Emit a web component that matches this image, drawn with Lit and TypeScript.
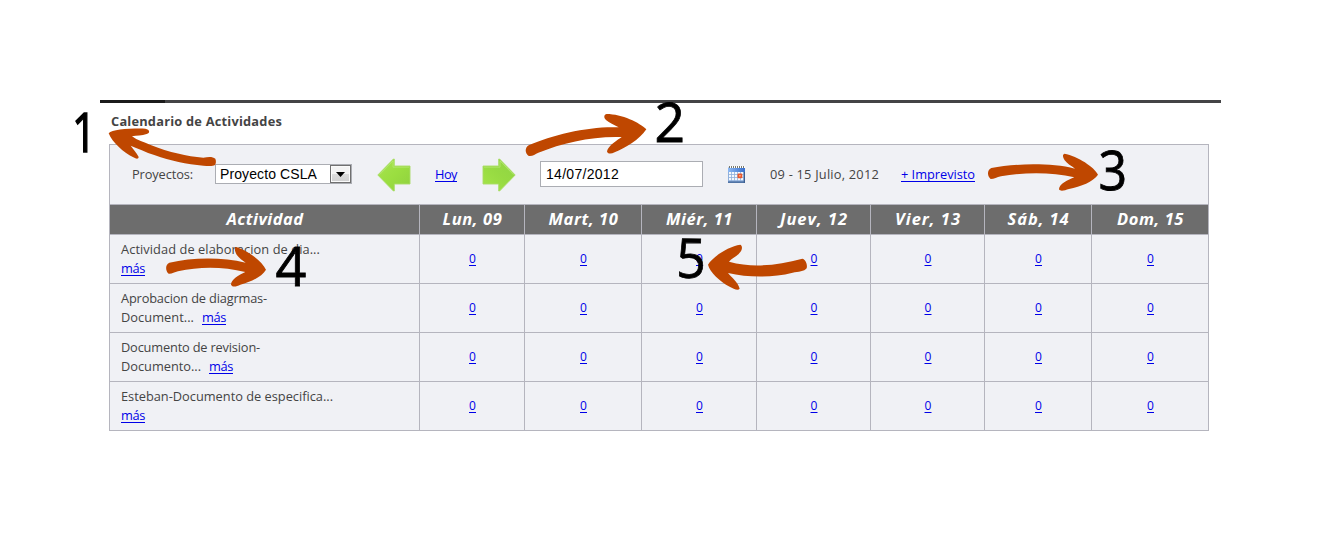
import { LitElement, html, css, svg } from "lit";
import { customElement, property } from "lit/decorators.js";

/** Inline text whose tracking is adjusted so that it spans a given width. */
@customElement("fit-text")
class FitText extends LitElement {
  @property({ type: Number }) w = 0;
  @property({ type: Boolean }) link = false;
  static styles = css`
    :host { display: inline-block; white-space: pre; }
    .t { display: inline-block; }
    .u { text-decoration: underline; text-underline-offset: 2px; text-decoration-thickness: 1px; text-decoration-skip-ink: none; }
  `;
  render() {
    return html`<span class=${this.link ? "t u" : "t"}><slot></slot></span>`;
  }
  firstUpdated() {
    const t = this.renderRoot.querySelector(".t") as HTMLElement;
    const n = (this.textContent || "").length;
    const width = t.getBoundingClientRect().width;
    if (this.w && n) t.style.letterSpacing = `${(this.w - width) / n}px`;
  }
}

const days: [string, number][] = [
  ["Lun, 09", 60], ["Mart, 10", 70], ["Miér, 11", 67], ["Juev, 12", 68],
  ["Vier, 13", 66], ["Sáb, 14", 62], ["Dom, 15", 67],
];

const rows: { a: string; aw: number; b?: string; bw?: number }[] = [
  { a: "Actividad de elaboracion de dia...", aw: 199 },
  { a: "Aprobacion de diagrmas-", aw: 146, b: "Document...", bw: 73 },
  { a: "Documento de revision-", aw: 139, b: "Documento...", bw: 80 },
  { a: "Esteban-Documento de especifica...", aw: 212 },
];

const green = (id: string, flip: boolean) => html`
  <svg class="nav" width="34" height="34" viewBox="0 0 34 34">
    <defs>
      <linearGradient id=${id} x1="0" y1="0" x2="1" y2="1">
        <stop offset="0" stop-color=${flip ? "#8fd444" : "#a8e253"} />
        <stop offset=".5" stop-color=${flip ? "#97da42" : "#9bde40"} />
        <stop offset="1" stop-color=${flip ? "#a5e548" : "#8fd03f"} />
      </linearGradient>
    </defs>
    <g transform=${flip ? "translate(34 0) scale(-1 1)" : ""}>
      <path d="M.8 17 16.4 1 17.3 1V8H33V26H17.3V33H16.4Z" fill="url(#${id})" stroke="#a9dc68" stroke-width=".9" />
      <path d="M2.5 16.7 16 3V9.2H32" fill="none" stroke="#b9ea78" stroke-width=".7" />
    </g>
  </svg>`;

@customElement("app-root")
class AppRoot extends LitElement {
  static styles = css`
    :host {
      display: block; position: relative; box-sizing: border-box;
      width: 1321px; height: 540px; padding: 100px 100px 0;
      background: #fff; overflow: hidden;
      font: 12.8px/19px "Open Sans", "Noto Sans", sans-serif; color: #444;
    }
    .rule { height: 3px; background: linear-gradient(90deg, #1b1b1b 65px, #444446 65px); }
    .title { margin: 9px 0 0 11px; height: 19px; font-weight: 700; font-size: 12.8px; }
    .cal {
      margin: 13px 0 0 9px; width: 1098px; padding: 1px; background: #b5b5be;
      display: grid; gap: 1px;
      grid-template-columns: 309px 104px 116px 114px 113px 113px 106px 116px;
      grid-template-rows: 59px 29px repeat(4, 48px);
    }
    .bar { grid-column: 1 / -1; background: #f0f1f5; display: flex; align-items: center; padding-left: 22px; }
    .bar > * { flex: none; }
    .label { width: 83px; }
    .select {
      box-sizing: border-box; width: 137px; height: 20px; border: 1px solid #abadb3; background: #fff;
      display: flex; align-items: center; justify-content: space-between; padding-left: 4px; margin-bottom: 1px;
      font: 14px/18px "Liberation Sans", Arial, sans-serif; color: #000;
    }
    .drop {
      box-sizing: border-box; width: 21px; height: 18px; border: 1px solid #707070;
      background: linear-gradient(#f3f3f3 50%, #dcdcdc 50%, #d0d0d0);
      display: flex; align-items: center; justify-content: center; box-shadow: inset 0 0 0 1px #fafafa;
    }
    .nav { margin: 0 24px 0 25px; display: block; }
    .nav + a { width: 22px; }
    .date {
      box-sizing: border-box; width: 163px; height: 26px; border: 1px solid #abadb3; background: #fff;
      padding-left: 5px; font: 14px/24px "Liberation Sans", Arial, sans-serif; color: #000; margin-bottom: 1px;
    }
    .icon { margin: 0 25px 1px; display: block; }
    .range { width: 131px; }
    a { color: #0000e8; }
    .head {
      background: #6d6d6d; color: #fff; font-weight: 700; font-style: italic; font-size: 16.5px;
      display: flex; align-items: center; justify-content: center; padding: 0 0 2px 1px;
    }
    .cell { background: #f0f1f5; display: flex; align-items: center; justify-content: center; padding: 0 0 1px 1px; font-size: 12px; }
    .act { background: #f0f1f5; padding: 5px 0 0 11px; }
    .line { height: 19px; display: flex; gap: 8px; }
    .notes { position: absolute; left: 0; top: 0; }
    .num { font: 54.5px "Open Sans", "Noto Sans", sans-serif; fill: #000; stroke: #000; stroke-width: .8px; }
  `;

  render() {
    return html`
      <div class="rule"></div>
      <div class="title"><fit-text w="171">Calendario de Actividades</fit-text></div>
      <div class="cal">
        <div class="bar">
          <span class="label"><fit-text w="61">Proyectos:</fit-text></span>
          <span class="select"><fit-text w="97">Proyecto CSLA</fit-text>
            <span class="drop"><svg width="9" height="5" viewBox="0 0 9 5"><path d="M0 0h9L4.5 5z" fill="#000" /></svg></span>
          </span>
          ${green("gl", false)}
          <a><fit-text link w="22">Hoy</fit-text></a>
          ${green("gr", true)}
          <span class="date"><fit-text w="73">14/07/2012</fit-text></span>
          <svg class="icon" width="17" height="17" viewBox="0 0 17 17">
            <defs><linearGradient id="ch" x1="0" x2="1"><stop stop-color="#8db9f3" /><stop offset="1" stop-color="#386fce" /></linearGradient></defs>
            <rect y="1.5" width="17" height="15.5" fill="#8fb0dc" />
            <rect x="0" y="2" width="17" height="4" fill="url(#ch)" />
            <path d="M1 1h16" stroke="#fff" stroke-width="2" />
            <path d="M1 1h16" stroke="#77786e" stroke-width="2" stroke-dasharray="1 1" />
            <g fill="#f4f8fd">
              ${[1, 4, 7, 10, 13].map((x) => [6, 9, 12].map((y) => svg`<rect x=${x} y=${y} width="2.2" height="2.2" />`))}
            </g>
            <path d="M0 16.2H17M16.4 6V17" stroke="#3c5f91" stroke-width="1.3" />
            <rect x="9.500" y="7.500" width="4.800" height="4.800" rx="1" fill="#e8582d" />
            <rect x="11" y="9" width="1.800" height="1.500" fill="#ffa17c" />
          </svg>
          <span class="range"><fit-text w="109">09 - 15 Julio, 2012</fit-text></span>
          <a><fit-text link w="74">+ Imprevisto</fit-text></a>
        </div>
        <div class="head"><fit-text w="77">Actividad</fit-text></div>
        ${days.map(([d, w]) => html`<div class="head"><fit-text w=${w}>${d}</fit-text></div>`)}
        ${rows.map((r) => html`
          <div class="act">
            <div class="line"><fit-text w=${r.aw}>${r.a}</fit-text></div>
            <div class="line">${r.b ? html`<fit-text w=${r.bw}>${r.b}</fit-text>` : ""}<a><fit-text link w="24">más</fit-text></a></div>
          </div>
          ${days.map(() => html`<div class="cell"><a><fit-text link w="7">0</fit-text></a></div>`)}
        `)}
      </div>
      <svg class="notes" width="1321" height="540" viewBox="0 0 1321 540">
        <g fill="#bf4700">
          <path transform="translate(70 105) scale(.33333)" d="M116 85C126 74 175 70 226 71C240 73 241 84 230 87C216 92 199 91 186 94C202 106 222 112 240 119C300 143 350 153 400 158C415 155 428 154 436 161C439 168 438 176 435 180C428 185 412 183 400 182C350 179 300 167 255 151C226 141 203 130 182 122C190 133 200 143 206 156C205 163 199 162 190 157C160 143 127 112 116 85Z" />
          <path transform="translate(350 90) scale(.33333)" d="M889 118C870 98 815 72 770 72C761 74 761 83 768 90C778 98 792 104 806 112C720 108 610 133 536 166C524 174 525 189 535 197C545 200 555 193 565 188C640 158 725 138 815 141C804 149 775 166 771 184C772 192 783 193 794 187C826 174 869 149 889 118Z" />
          <path transform="translate(970 90) scale(.33333)" d="M384 254C373 231 324 199 283 191C276 194 279 203 284 211C291 221 304 228 315 236C240 217 130 221 64 234C50 240 52 260 62 267C73 267 80 262 93 259C165 246 245 246 313 262C294 269 267 283 267 298C272 306 284 301 297 297C332 290 370 275 384 254Z" />
          <path transform="translate(100 200) scale(.33333)" d="M498 209C486 184 446 153 409 141C402 143 404 153 410 164C417 174 428 181 437 188C365 170 275 172 208 188C194 194 197 214 206 221C215 222 223 217 234 214C300 199 370 200 436 216C416 225 393 239 393 254C398 263 410 259 421 254C451 247 486 230 498 209Z" />
          <path transform="translate(660 200) scale(.33333)" d="M144 194C158 171 204 139 241 134C248 138 247 148 241 156C233 168 216 174 207 185C280 205 350 196 427 176C437 178 443 194 440 205C433 215 415 215 398 218C335 234 265 233 204 219C215 232 235 248 239 266C234 273 220 266 209 260C180 245 150 217 144 194Z" />
        </g>
        <g class="num">
          <text transform="translate(72 152) scale(.78 1)" stroke-width="1.400">1</text>
          <text transform="translate(654.500 142) scale(.98 1)">2</text>
          <text transform="translate(1098.500 190) scale(.92 1)">3</text>
          <text transform="translate(275.500 286) scale(.99 1)">4</text>
          <text transform="translate(676 277.500) rotate(1) scale(.95 1)">5</text>
        </g>
      </svg>
    `;
  }
}
